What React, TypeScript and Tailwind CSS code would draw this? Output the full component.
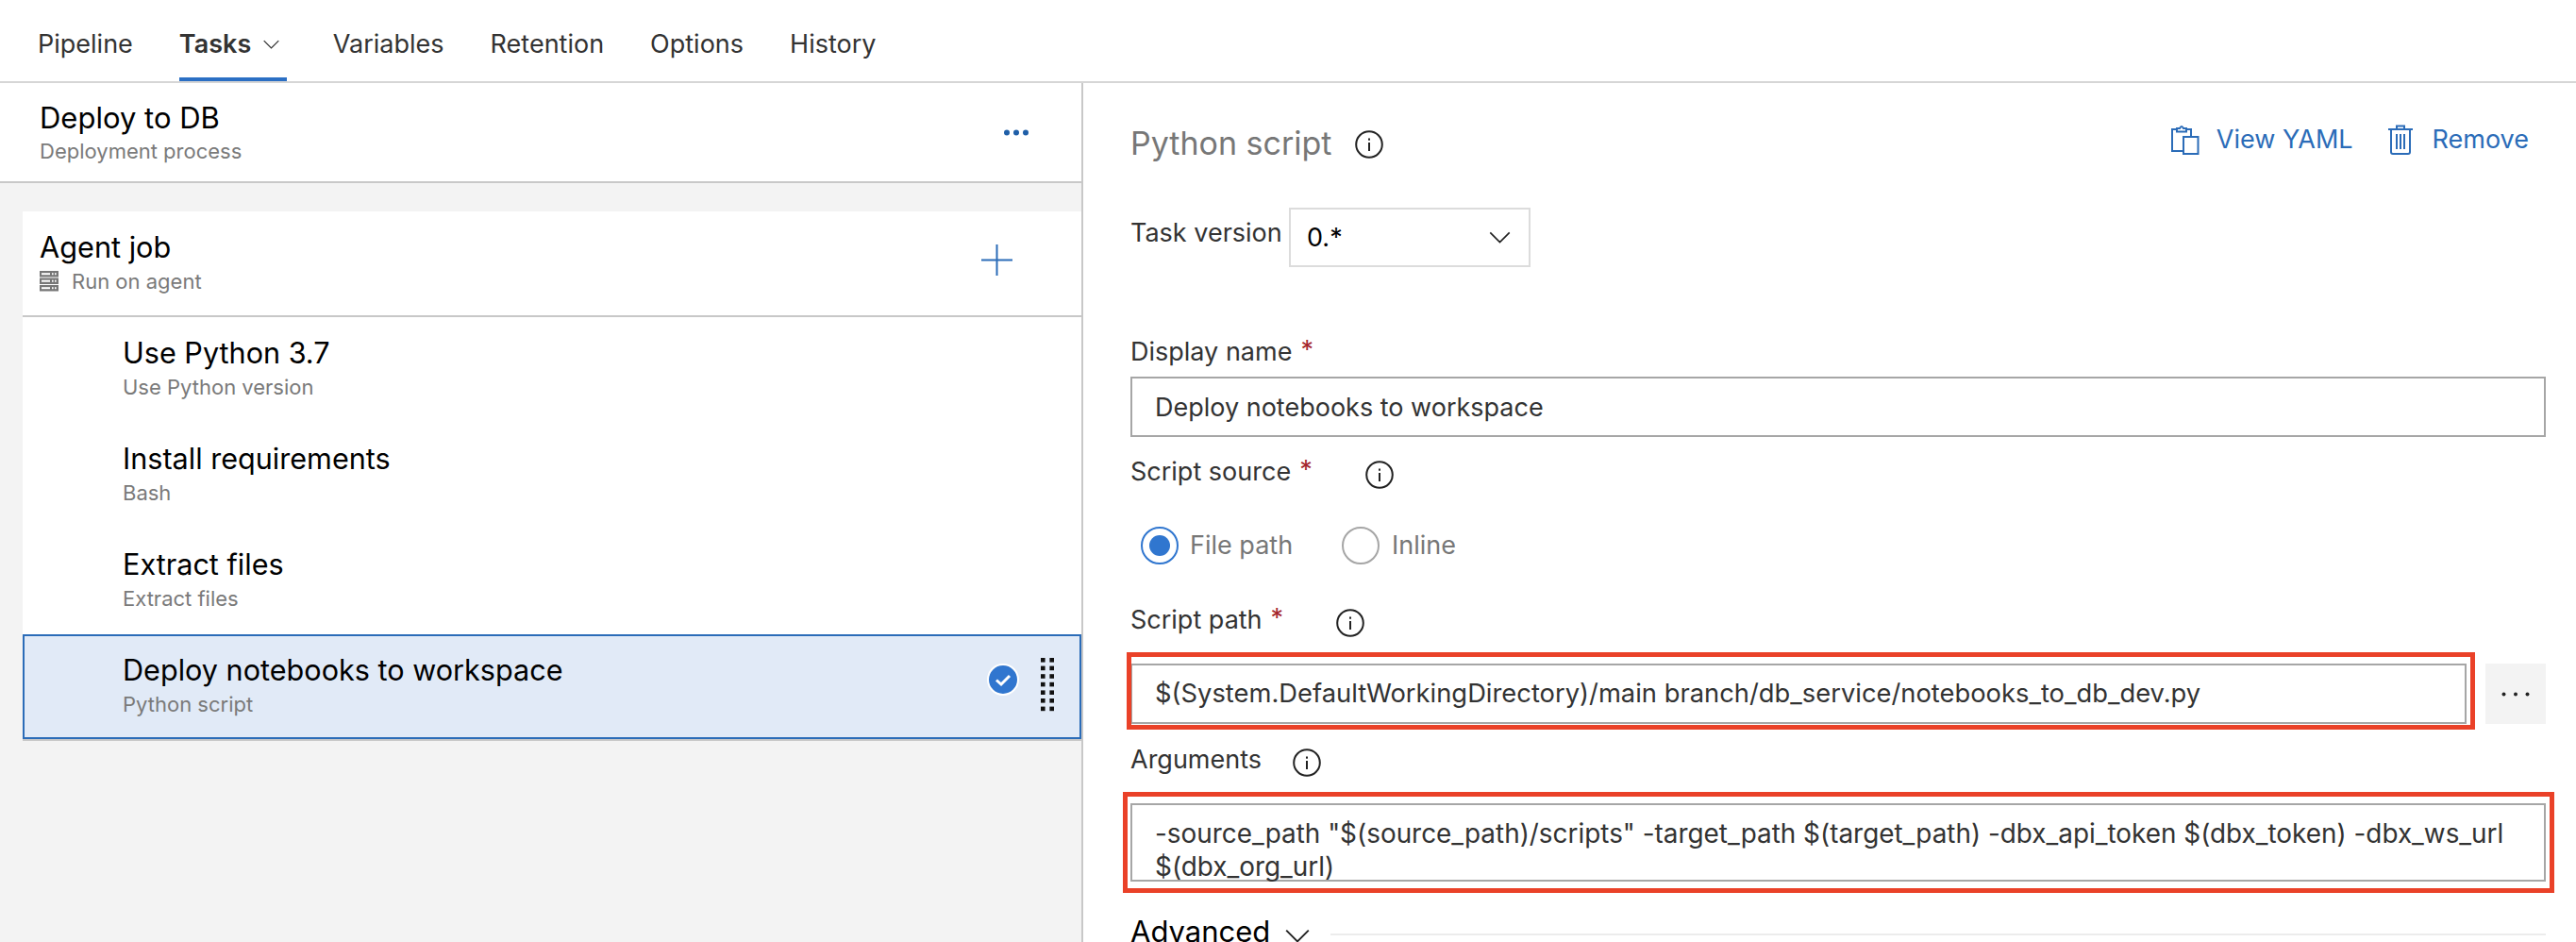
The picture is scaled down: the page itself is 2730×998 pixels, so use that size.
import React from "react";

const Info = ({ className = "" }: { className?: string }) => (
  <svg viewBox="0 0 30 30" className={"w-[30px] h-[30px] shrink-0 " + className}>
    <circle cx="15" cy="15" r="13.8" fill="none" stroke="#222" strokeWidth="2" />
    <rect x="14" y="13" width="2" height="9" fill="#222" />
    <rect x="14" y="8.5" width="2" height="2.2" fill="#222" />
  </svg>
);

const Chevron = ({ className = "", stroke = "#222" }: { className?: string; stroke?: string }) => (
  <svg viewBox="0 0 24 14" className={className}>
    <path d="M1 1.5 L12 12.5 L23 1.5" fill="none" stroke={stroke} strokeWidth="1.8" />
  </svg>
);

const Req = () => <span className="text-[#a4262c] text-[27px] ml-[9px] relative -top-[2px]">*</span>;

const Task = ({ title, sub, selected }: { title: string; sub: string; selected?: boolean }) => (
  <div className={selected ? "relative h-[111px] bg-[#e1eaf7] border-2 border-[#2b6cb8] pl-[104px] pr-[27px] flex items-center justify-between shadow-[0_2px_0_#c8c8c8]" : "h-[112px] bg-white pl-[106px] flex items-center"}>
    <div className="-mt-[5px]">
      <div className="text-[30.6px] leading-[40px] text-black">{title}</div>
      <div className="text-[22px] leading-[30px] mt-[1px] text-[#7a7a7a]">{sub}</div>
    </div>
    {selected && (
      <div className="flex items-center gap-[23px]">
        <svg viewBox="0 0 34 34" className="w-[34px] h-[34px] -mt-[15px]">
          <circle cx="17" cy="17" r="16" fill="#3076cf" stroke="#fff" strokeWidth="2" />
          <path d="M10 17.5 L15 22 L24 13" fill="none" stroke="#fff" strokeWidth="3" />
        </svg>
        <svg viewBox="0 0 14 57" className="w-[14px] h-[57px] -mt-[4px]">
          {[0, 1, 2, 3, 4, 5, 6].map((r) => (
            <g key={r} fill="#111">
              <rect x="0" y={r * 8.6} width="4.6" height="4.6" />
              <rect x="9.4" y={r * 8.6} width="4.6" height="4.6" />
            </g>
          ))}
        </svg>
      </div>
    )}
  </div>
);

const inputClass = "h-[64px] border-2 border-[#a6a6a6] bg-white pl-[24px] flex items-center text-[#333]";

export default function App() {
  return (
    <div className="w-[2730px] h-[998px] overflow-hidden bg-white font-['Inter',sans-serif] flex flex-col">
      <div className="h-[88px] shrink-0 border-b-2 border-[#d6d6d6] pl-[40px] flex gap-[49px] text-[27px] text-[#333]">
        <div className="h-[86px] flex items-center pt-[8px]">Pipeline</div>
        <div className="h-[86px] w-[114px] flex items-center gap-[13px] pt-[12px] border-b-4 border-[#2b6fc4] font-semibold">
          Tasks
          <Chevron className="w-[17px] h-[10px]" stroke="#333" />
        </div>
        <div className="h-[86px] flex items-center pt-[8px]">Variables</div>
        <div className="h-[86px] flex items-center pt-[8px]">Retention</div>
        <div className="h-[86px] flex items-center pt-[8px]">Options</div>
        <div className="h-[86px] flex items-center pt-[8px]">History</div>
      </div>

      <div className="flex flex-1 min-h-0">
        <div className="w-[1148px] shrink-0 border-r-2 border-[#c8c8c8] bg-[#f3f3f3]">
          <div className="h-[106px] bg-white border-b-2 border-[#c8c8c8] pl-[42px] pr-[56px] flex items-center justify-between">
            <div>
              <div className="text-[31px] leading-[40px] text-black">Deploy to DB</div>
              <div className="text-[22px] leading-[30px] text-[#7a7a7a]">Deployment process</div>
            </div>
            <svg viewBox="0 0 26 7" className="w-[26px] h-[7px]">
              <circle cx="3" cy="3.5" r="3" fill="#1f5fa8" />
              <circle cx="13" cy="3.5" r="3" fill="#1f5fa8" />
              <circle cx="23" cy="3.5" r="3" fill="#1f5fa8" />
            </svg>
          </div>
          <div className="ml-[24px] mt-[30px]">
            <div className="h-[112px] bg-white border-b-2 border-[#c8c8c8] pl-[18px] pr-[73px] flex items-center justify-between">
              <div className="-mt-[4px]">
                <div className="text-[30.7px] leading-[40px] text-black">Agent job</div>
                <div className="flex items-center gap-[14px] mt-[1px]">
                  <svg viewBox="0 0 20 22" className="w-[20px] h-[22px]">
                    {[0, 7.5, 15].map((y) => (
                      <g key={y}>
                        <rect x="0" y={y} width="20" height="6.5" fill="#777" />
                        <rect x="2" y={y + 2.2} width="9" height="2" fill="#fff" />
                        <rect x="13" y={y + 2.2} width="1.6" height="2" fill="#fff" />
                        <rect x="16" y={y + 2.2} width="1.6" height="2" fill="#fff" />
                      </g>
                    ))}
                  </svg>
                  <span className="text-[22px] leading-[30px] text-[#7a7a7a]">Run on agent</span>
                </div>
              </div>
              <svg viewBox="0 0 33 33" className="w-[33px] h-[33px] mb-[7px]">
                <path d="M16.5 0 V33 M0 16.5 H33" stroke="#2b6cb8" strokeWidth="2" fill="none" />
              </svg>
            </div>
            <Task title="Use Python 3.7" sub="Use Python version" />
            <Task title="Install requirements" sub="Bash" />
            <Task title="Extract files" sub="Extract files" />
            <Task title="Deploy notebooks to workspace" sub="Python script" selected />
          </div>
        </div>

        <div className="flex-1 min-w-0 pl-[50px] pr-[32px] text-[27px] text-[#333]">
          <div className="h-[126px] flex items-center justify-between">
            <div className="flex items-center gap-[25px]">
              <span className="text-[34px] text-[#777]">Python script</span>
              <Info className="mt-[4px]" />
            </div>
            <div className="flex items-center text-[#2b6cb8] pr-[18px] -mt-[6px]">
              <svg viewBox="0 0 30 32" className="w-[30px] h-[32px] mr-[18px]" fill="#fff" stroke="#2b6cb8" strokeWidth="2">
                <path d="M1 5 H21 V28 H1 Z" />
                <path d="M6 7.5 V4 H9 Q11 0 13 4 H16 V7.5 Z" />
                <path d="M13 13 H28.5 V31 H13 Z" />
              </svg>
              <span>View YAML</span>
              <svg viewBox="0 0 26 32" className="w-[26px] h-[32px] ml-[37px] mr-[21px]" fill="none" stroke="#2b6cb8" strokeWidth="2">
                <path d="M0 5 H26 M3 5 V29 Q3 31 5 31 H21 Q23 31 23 29 V5 M9 5 V1.5 H17 V5 M9 10 V26 M13 10 V26 M17 10 V26" />
              </svg>
              <span>Remove</span>
            </div>
          </div>

          <div className="mt-[6px] flex gap-[9px]">
            <div className="leading-[54px] w-[159px] whitespace-nowrap">Task version</div>
            <div className="h-[63px] w-[256px] border-2 border-[#dcdcdc] pl-[17px] pr-[19px] flex items-center justify-between text-black">
              <span className="mt-[1px]">0.*</span>
              <Chevron className="w-[23px] h-[13px]" />
            </div>
          </div>

          <div className="mt-[68px] h-[44px] flex items-center">Display name<Req /></div>
          <div className={"mt-[4px] pt-[2px] " + inputClass}>Deploy notebooks to workspace</div>

          <div className="mt-[15px] h-[44px] flex items-center">
            Script source<Req />
            <Info className="ml-[56px] mt-[6px]" />
          </div>

          <div className="mt-[36px] h-[40px] flex items-center pl-[11px] text-[#777]">
            <div className="w-[40px] h-[40px] rounded-full border-2 border-[#3076cf] flex items-center justify-center">
              <div className="w-[22px] h-[22px] rounded-full bg-[#3076cf]" />
            </div>
            <span className="ml-[12px] w-[161px]">File path</span>
            <div className="w-[40px] h-[40px] rounded-full border-2 border-[#a6a6a6]" />
            <span className="ml-[13px]">Inline</span>
          </div>

          <div className="mt-[37px] h-[44px] flex items-center">
            Script path<Req />
            <Info className="ml-[56px] mt-[6px]" />
          </div>

          <div className="mt-[24px] flex gap-[20px]">
            <div className={"relative flex-1 text-[27.35px] " + inputClass}>
              $(System.DefaultWorkingDirectory)/main branch/db_service/notebooks_to_db_dev.py
              <div className="absolute left-[-6px] right-[-11px] top-[-14px] bottom-[-8px] border-[5px] border-[#ea4128] pointer-events-none" />
            </div>
            <div className="w-[64px] h-[64px] bg-[#f3f3f3] flex items-center justify-center">
              <svg viewBox="0 0 30 5" className="w-[30px] h-[5px]">
                <circle cx="2.5" cy="2.5" r="2" fill="#222" />
                <circle cx="15" cy="2.5" r="2" fill="#222" />
                <circle cx="27.5" cy="2.5" r="2" fill="#222" />
              </svg>
            </div>
          </div>

          <div className="mt-[16px] h-[44px] flex items-center">
            Arguments
            <Info className="ml-[33px] mt-[6px]" />
          </div>

          <div className="relative mt-[24px] h-[83px] border-2 border-[#a6a6a6] pl-[24px] pt-[13px] leading-[35px] text-[27.9px]">
            -source_path "$(source_path)/scripts" -target_path $(target_path) -dbx_api_token $(dbx_token) -dbx_ws_url
            <br />
            $(dbx_org_url)
            <div className="absolute left-[-10px] right-[-11px] top-[-14px] bottom-[-14px] border-[5px] border-[#ea4128] pointer-events-none" />
          </div>

          <div className="mt-[31px] h-[44px] flex items-center text-[31px] text-black">
            Advanced
            <Chevron className="w-[26px] h-[15px] ml-[16px] mt-[8px]" />
            <div className="flex-1 h-[2px] bg-[#ececec] ml-[22px] mt-[6px]" />
          </div>
        </div>
      </div>
    </div>
  );
}
